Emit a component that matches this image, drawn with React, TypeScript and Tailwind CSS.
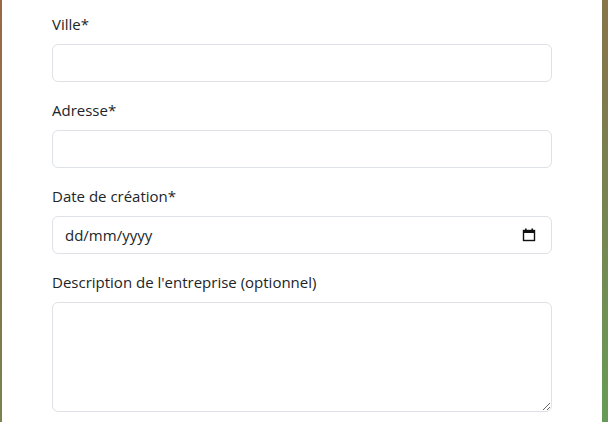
import React from "react";

const labelCls = "block mb-2 text-[15px] leading-6 text-[#212529]";
const inputCls =
  "block w-full h-[38px] rounded-[6px] border border-[#dee2e6] bg-white px-3 text-[15px] leading-6 text-[#212529] outline-none";

export default function App() {
  return (
    <div
      className="w-[608px] h-[422px] flex overflow-hidden bg-[linear-gradient(160deg,#9b6944_0%,#7f7a4c_50%,#679b58_100%)]"
      style={{ fontFamily: '"Open Sans", "Noto Sans", sans-serif' }}
    >
      <div className="ml-[2px] w-[600px] h-full bg-white px-[50px] pt-3">
        <div className="mb-4">
          <label className={labelCls}>Ville*</label>
          <input className={inputCls} type="text" />
        </div>
        <div className="mb-4">
          <label className={labelCls}>Adresse*</label>
          <input className={inputCls} type="text" />
        </div>
        <div className="mb-4">
          <label className={labelCls}>Date de création*</label>
          <div className={inputCls + " flex items-center justify-between"}>
            <span>dd/mm/yyyy</span>
            <svg width="14" height="14" viewBox="0 0 14 14" className="mr-[3px]">
              <rect x="1.5" y="2.5" width="11" height="10" fill="none" stroke="#111" strokeWidth="1.4" />
              <rect x="1" y="2" width="12" height="3" fill="#111" />
              <rect x="3" y="0.5" width="1.6" height="2" fill="#111" />
              <rect x="9.4" y="0.5" width="1.6" height="2" fill="#111" />
            </svg>
          </div>
        </div>
        <div className="mb-4">
          <label className={labelCls}>Description de l'entreprise (optionnel)</label>
          <textarea className={inputCls + " h-[110px] py-1.5 resize-y"} />
        </div>
      </div>
    </div>
  );
}
